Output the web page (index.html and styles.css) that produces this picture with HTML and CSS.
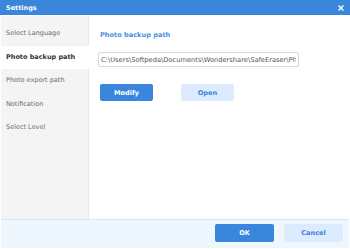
FILE: index.html
```html
<!DOCTYPE html>
<html lang="en">
<head>
    <meta charset="UTF-8">
    <title>Settings</title>
    <link rel="stylesheet" href="styles.css">
</head>
<body>
    <div class="window">
        <!-- Title bar -->
        <div class="titlebar">
            <span class="title">Settings</span>
            <svg class="close" width="6" height="6" viewBox="0 0 6 6">
                <path d="M0.5 0.5 L5.5 5.5 M5.5 0.5 L0.5 5.5" stroke="#fff" stroke-width="1.4"/>
            </svg>
        </div>

        <div class="main">
            <!-- Menu -->
            <ul class="sidebar">
                <li class="item">Select Language</li>
                <li class="item active">Photo backup path</li>
                <li class="item">Photo export path</li>
                <li class="item">Notification</li>
                <li class="item">Select Level</li>
            </ul>

            <!-- Panel -->
            <div class="content">
                <h2 class="heading">Photo backup path</h2>
                <input class="path" type="text" value="C:\Users\Softpeda\Documents\Wondershare\SafeEraser\Photo" readonly>
                <div class="actions">
                    <button class="btn primary small">Modify</button>
                    <button class="btn light small">Open</button>
                </div>
            </div>
        </div>

        <div class="footer">
            <button class="btn primary big">OK</button>
            <button class="btn light big">Cancel</button>
        </div>
    </div>
</body>
</html>
```

FILE: styles.css
```css
* {
    margin: 0;
    padding: 0;
    box-sizing: border-box;
}

body {
    font-family: "DejaVu Sans", Verdana, sans-serif;
    font-size: 6.5px;
    background-color: #fff;
    width: 350px;
    height: 249px;
    overflow: hidden;
}

.titlebar {
    height: 15px;
    background-color: #3a86da;
    color: #fff;
    display: flex;
    justify-content: space-between;
    align-items: center;
    padding: 0 6px 0 6px;
}

.title {
    font-weight: bold;
    font-size: 6.5px;
}

.main {
    display: flex;
    height: 203px;
    margin: 1px 1px 0 1px;
}

.sidebar {
    list-style: none;
    width: 88px;
    background-color: #f4f4f4;
    border-right: 1px solid #e7e7e7;
    padding-top: 6px;
}

.item {
    height: 23.5px;
    line-height: 23.5px;
    padding-left: 5px;
    color: #6a6a6a;
    white-space: nowrap;
}

.item.active {
    background-color: #fff;
    color: #333;
    font-weight: bold;
    margin-right: -1px;
}

.content {
    flex: 1;
    padding: 15px 0 0 9px;
}

.heading {
    font-size: 6.6px;
    line-height: 8px;
    color: #4a8fe0;
    padding-left: 2px;
}

.path {
    display: block;
    width: 201px;
    height: 15px;
    margin-top: 13px;
    border: 1px solid #d9d9d9;
    border-radius: 2px;
    padding: 0 2px;
    font-family: inherit;
    font-size: 6.7px;
    color: #555;
    outline: none;
}

.actions {
    display: flex;
    gap: 28px;
    margin: 17px 0 0 2px;
}

.btn {
    border: none;
    border-radius: 2px;
    font-family: inherit;
    font-weight: bold;
    font-size: 6.6px;
    cursor: pointer;
}

.btn.small {
    width: 53px;
    height: 17px;
}

.btn.big {
    width: 59px;
    height: 18px;
}

.primary {
    background-color: #3a86dc;
    color: #fff;
}

.light {
    background-color: #dcebfd;
    color: #3d84d6;
}

.footer {
    height: 29px;
    margin: 0 1px;
    background-color: #eef6fe;
    border-top: 1px solid #d7e7f8;
    display: flex;
    justify-content: flex-end;
    gap: 10px;
    padding: 4px 6px 0 0;
}
```
